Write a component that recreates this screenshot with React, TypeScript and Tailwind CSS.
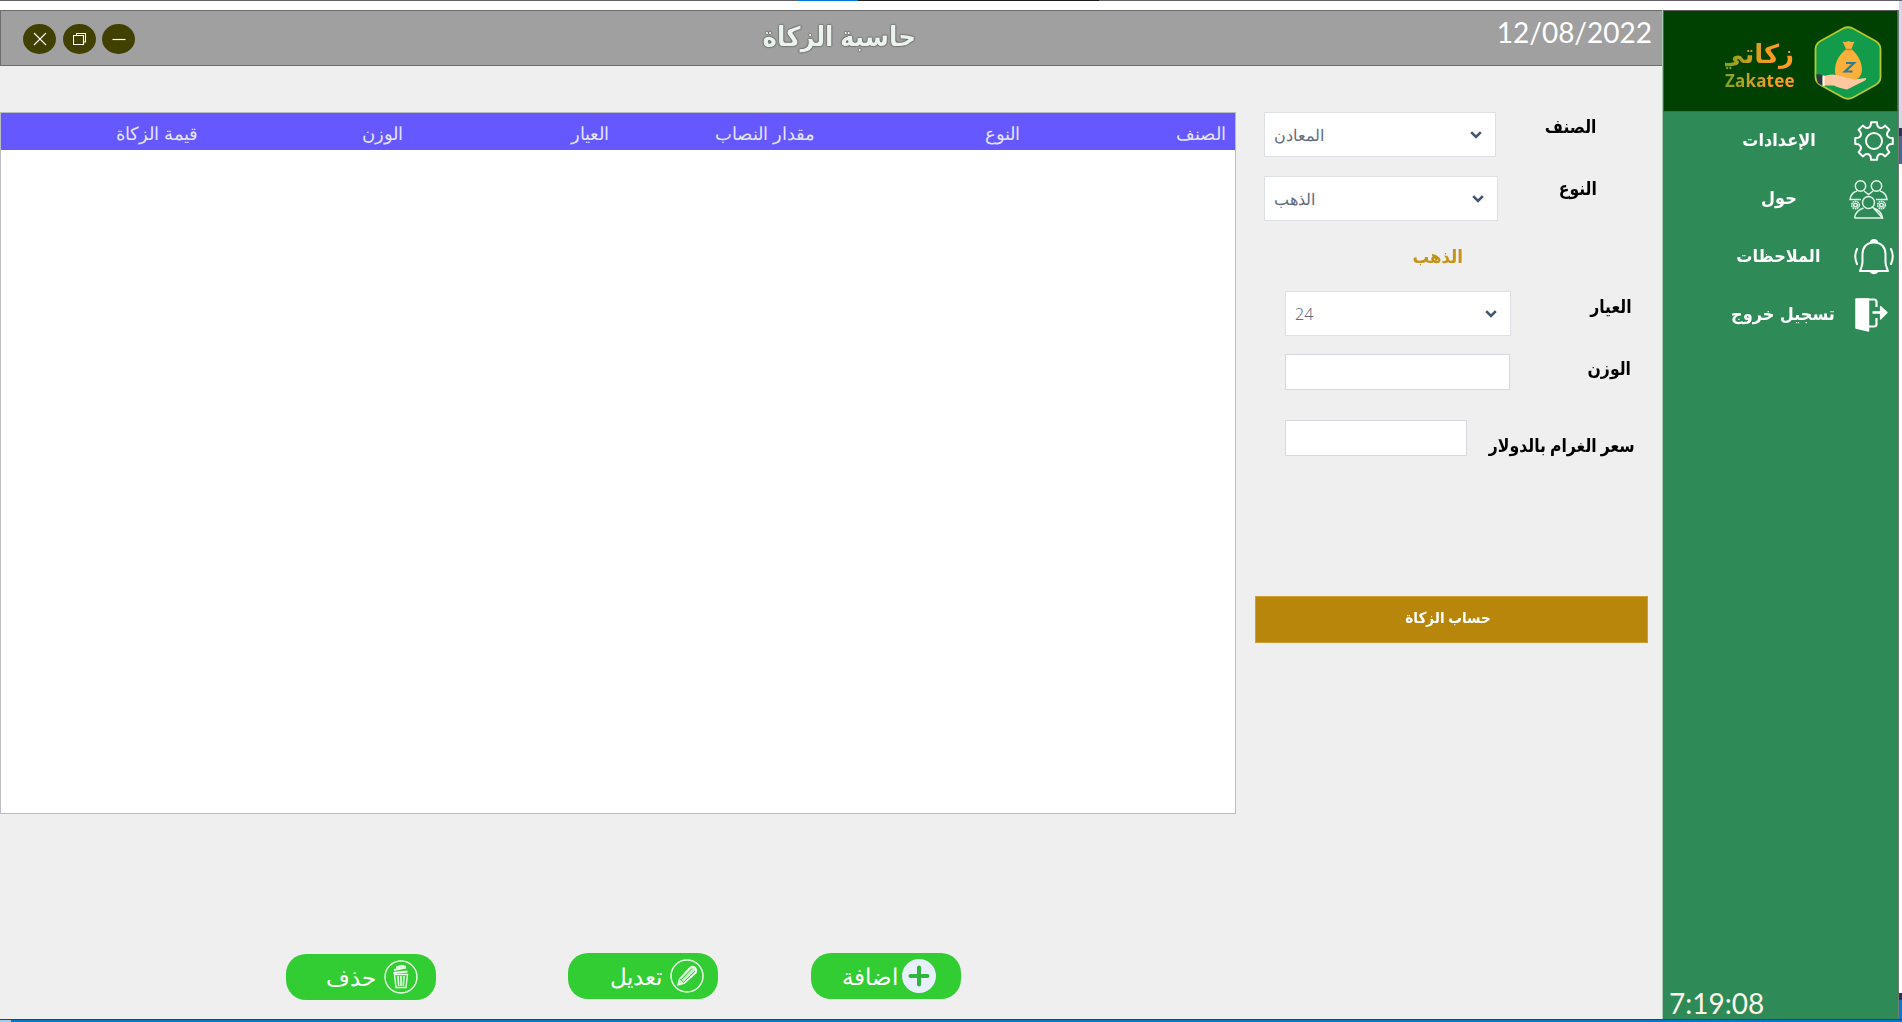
import type { ReactNode } from "react";

const arabic = "font-['Noto_Sans','DejaVu_Sans',sans-serif]";

const columns = ["الصنف", "النوع", "مقدار النصاب", "العيار", "الوزن", "قيمة الزكاة"];

function WindowButton({ children }: { children: ReactNode }) {
  return (
    <button className="flex h-[30px] w-[33px] items-center justify-center rounded-[50%] bg-[#404000]">
      {children}
    </button>
  );
}

function TitleBar() {
  return (
    <header className="flex h-14 justify-between border-t border-b border-l border-[#6d6d6d] bg-[#a0a0a0] pr-[10px] pl-[22px]">
      <div className="flex w-[190px] pt-[13px]">
        <WindowButton>
          <svg width="14" height="14" viewBox="0 0 14 14" fill="none" stroke="#fff" strokeWidth="1.1">
            <path d="M1 1L13 13M13 1L1 13" />
          </svg>
        </WindowButton>
        <span className="w-[7px]" />
        <WindowButton>
          <svg width="14" height="14" viewBox="0 0 14 14" fill="none" stroke="#fff" strokeWidth="1.1">
            <path d="M0.500 3.500h10v9h-10zM3.500 3.500V1.500h9V10h-2" />
          </svg>
        </WindowButton>
        <span className="w-[6px]" />
        <WindowButton>
          <svg width="14" height="14" viewBox="0 0 14 14" stroke="#fff" strokeWidth="1.200">
            <path d="M0.500 7.500h13" />
          </svg>
        </WindowButton>
      </div>
      <h1
        dir="rtl"
        className={`${arabic} mt-[5px] mr-[26px] origin-center scale-x-[0.91] text-[27px] leading-[40px] font-bold whitespace-nowrap text-[#eaf3ec] [text-shadow:0_0_1px_#444,0_0_2px_#444,0_0_1px_#444]`}
      >
        حاسبة الزكاة
      </h1>
      <time className="mt-[2px] w-[160px] text-right font-['Lato'] text-[28px] leading-[38px] whitespace-nowrap text-white">
        12/08/2022
      </time>
    </header>
  );
}

function ZakatTable() {
  return (
    <section dir="rtl" className="mt-[46px] h-[702px] w-[1236px] border border-[#b9bcc3] bg-white">
      <div className="grid h-[37px] grid-cols-6 bg-[#6558ff]">
        {columns.map((c) => (
          <div key={c} className={`${arabic} pr-[9px] text-[17.5px] leading-[40px] font-light text-[#e6e3ff]`}>
            {c}
          </div>
        ))}
      </div>
    </section>
  );
}

function ActionButton({ label, icon, className }: { label: string; icon: ReactNode; className: string }) {
  return (
    <button
      dir="rtl"
      className={`flex h-[46px] w-[150px] items-center rounded-[20px] bg-[#32cd32] text-white ${className}`}
    >
      {icon}
      <span className={`${arabic} text-[23px] leading-[30px] font-light whitespace-nowrap`}>{label}</span>
    </button>
  );
}

function AddIcon() {
  return (
    <svg width="34" height="34" viewBox="0 0 34 34">
      <circle cx="17" cy="17" r="17" fill="#e8f0ff" />
      <path d="M17 8.500v17M8.500 17h17" stroke="#32b53c" strokeWidth="4" strokeLinecap="round" />
    </svg>
  );
}

function EditIcon() {
  return (
    <svg width="34" height="34" viewBox="0 0 34 34" fill="none" stroke="#eaffea" strokeWidth="1.500">
      <circle cx="17" cy="17" r="16" />
      <path d="M8 26l1.500-6L20 8.500q3-2 5 0t1 5L14.500 24z" fill="#c9f3c9" />
      <path d="M11.500 20.500L22 9.500M14 23L25 12M10 20l4 4" stroke="#32cd32" strokeWidth="1" />
    </svg>
  );
}

function DeleteIcon() {
  return (
    <svg width="34" height="34" viewBox="0 0 34 34" fill="none" stroke="#eaffea" strokeWidth="1.400">
      <circle cx="17" cy="17" r="16" />
      <path d="M10.500 14.500h13l-1.500 13h-10z" />
      <path d="M14 16l.7 10M17 16v10M20 16l-.7 10" strokeWidth="1.600" />
      <path d="M9.500 13l14-1.500M10 10l12-2.500M12 7.500l6-1.500 4 1" strokeWidth="2.200" />
    </svg>
  );
}

function Actions() {
  return (
    <div className="mt-[139px] flex items-start">
      <ActionButton label="حذف" icon={<DeleteIcon />} className="mt-px ml-[286px] gap-[8px] pr-[18px]" />
      <ActionButton label="تعديل" icon={<EditIcon />} className="ml-[132px] gap-[8px] pr-[14px]" />
      <ActionButton label="اضافة" icon={<AddIcon />} className="ml-[93px] gap-[4px] pr-[25px]" />
    </div>
  );
}

function Label({ children, className }: { children: ReactNode; className: string }) {
  return (
    <label
      dir="rtl"
      className={`${arabic} origin-right scale-x-[0.87] text-[18px] leading-[26px] font-bold whitespace-nowrap text-black ${className}`}
    >
      {children}
    </label>
  );
}

function Select({ value, className }: { value: string; className: string }) {
  return (
    <div className={`flex h-[45px] items-center justify-between border border-[#dde0e5] bg-white pr-[13px] pl-[9px] ${className}`}>
      <span className={`${arabic} text-[16px] font-light text-[#5f6b80]`}>{value}</span>
      <svg width="12" height="8" viewBox="0 0 12 8" fill="none" stroke="#43566e" strokeWidth="2.600">
        <path d="M1.200 1.200L6 6l4.800-4.800" />
      </svg>
    </div>
  );
}

function CalculatorForm() {
  return (
    <section className="flex w-[424px] flex-col pt-[46px]">
      <div className="flex h-[64px] justify-between pr-[66px] pl-[26px]">
        <Select value="المعادن" className="w-[232px]" />
        <Label className="mt-[1px]">الصنف</Label>
      </div>
      <div className="flex h-[64px] justify-between pr-[65px] pl-[26px]">
        <Select value="الذهب" className="w-[234px]" />
        <Label className="-mt-[1px]">النوع</Label>
      </div>
      <div className="flex h-[51px] justify-end pr-[199px]">
        <span
          dir="rtl"
          className={`${arabic} mt-[3px] origin-right scale-x-[0.92] text-[18px] leading-[26px] font-bold text-[#c4941a]`}
        >
          الذهب
        </span>
      </div>
      <div className="flex h-[63px] justify-between pr-[30px] pl-[47px]">
        <Select value="24" className="w-[226px]" />
        <Label className="mt-[2px]">العيار</Label>
      </div>
      <div className="flex h-[66px] justify-between pr-[31px] pl-[47px]">
        <input aria-label="الوزن" className="h-[36px] w-[225px] border border-[#d5d9de] bg-white" />
        <Label className="mt-[1px]">الوزن</Label>
      </div>
      <div className="flex h-[176px] justify-between pr-[30px] pl-[47px]">
        <input aria-label="سعر الغرام" className="h-[36px] w-[182px] shrink-0 border border-[#d5d9de] bg-white" />
        <Label className="mt-[12px]">سعر الغرام بالدولار</Label>
      </div>
      <button
        dir="rtl"
        className={`${arabic} ml-[17px] h-[47px] w-[393px] border border-[#cf9f35] bg-[#b8860b] pr-[8px] pb-[4px] text-[15px] font-bold text-white`}
      >
        <span className="inline-block scale-x-[0.91]">حساب الزكاة</span>
      </button>
    </section>
  );
}

function Logo() {
  return (
    <div className="flex h-[102px] justify-end border border-[#5c5c5c] bg-[#004000] pr-[15px]">
      <div className="mt-[25px] w-[69px] bg-gradient-to-r from-[#7fa31d] to-[#ff9a22] to-70% bg-clip-text text-transparent">
        <div dir="rtl" className={`${arabic} h-[34px] text-[26px] leading-[34px] font-black whitespace-nowrap`}>زكاتي</div>
        <div className="font-['Noto_Sans'] text-[17px] leading-[22px] font-bold tracking-[0.2px]">Zakatee</div>
      </div>
      <svg className="mt-[15px] ml-[20px]" width="68" height="74" viewBox="0 0 68 74">
        <path
          d="M29 2.500q5-2.500 10 0L61.500 15q5 3 5 8v28q0 5-5 8L39 71.500q-5 2.500-10 0L6.500 59q-5-3-5-8V23q0-5 5-8z"
          fill="#139b4c"
          stroke="#b5c92b"
          strokeWidth="1.800"
        />
        <path d="M28.500 15.500q3 1 6-.5 3 1.500 6 .5l-3 7.500q10 9 10.500 20 0 12-14 12T21 43q.5-11 11-20z" fill="#fbb03b" />
        <path d="M31.500 23.500h6.500" stroke="#c6812a" strokeWidth="1.500" />
        <path d="M32 37h8l-9 8.500h7.500" fill="none" stroke="#2c7d9b" strokeWidth="2.200" />
        <path d="M10 50q9-3 16 0l14 3.500 12-1.500q1 2-4 4l-15 7.500q-10-2-13-4H10z" fill="#fdc7a0" />
        <path d="M2.500 48l6 1v11L4 57q-1.500-3-1.500-9z" fill="#35333d" />
        <path d="M9.500 49.500v10.500" stroke="#fff" strokeWidth="2" />
      </svg>
    </div>
  );
}

const polar = (radius: number, degrees: number) => {
  const a = (degrees * Math.PI) / 180;
  return `${(20 + radius * Math.cos(a)).toFixed(2)} ${(20 + radius * Math.sin(a)).toFixed(2)}`;
};

const gearOutline =
  Array.from({ length: 8 }, (_, i) => {
    const a = i * 45;
    return `${i ? "L" : "M"}${polar(19, a - 9)}L${polar(19, a + 9)}L${polar(16, a + 12)}Q${polar(13, a + 22.5)} ${polar(16, a + 33)}`;
  }).join("") + "Z";

function GearIcon() {
  return (
    <svg width="40" height="40" viewBox="0 0 40 40" fill="none" stroke="#fff" strokeWidth="2" strokeLinejoin="round">
      <circle cx="20" cy="20" r="8" />
      <path d={gearOutline} />
    </svg>
  );
}

function PeopleIcon() {
  return (
    <svg width="39" height="39" viewBox="0 0 39 39" fill="none" stroke="#e3f5ea" strokeWidth="1.500">
      <circle cx="11.500" cy="6" r="5.200" />
      <circle cx="27.500" cy="6" r="5.200" />
      <path d="M12 19.500H1q1-7 7-8.500M15 11l4.500 3.500L24 11M31 11q6 1.500 7 8.500H27" />
      <circle cx="19.500" cy="22.500" r="6" />
      <path d="M5.500 38q1-7.500 9-10M24.500 28q8 2.500 9 10zM5.500 38h28" />
      <circle cx="6.500" cy="25" r="3.800" strokeDasharray="1.800 .6" />
      <circle cx="32.500" cy="25" r="3.800" strokeDasharray="1.800 .6" />
      <circle cx="6.500" cy="25" r="1.800" />
      <circle cx="32.500" cy="25" r="1.800" />
    </svg>
  );
}

function BellIcon() {
  return (
    <svg width="40" height="36" viewBox="0 0 40 36" fill="none" stroke="#fff" strokeWidth="2" strokeLinecap="round" strokeLinejoin="round">
      <path d="M20 3.500C12 3.500 8.500 9 8.500 15v8c0 4-1.500 6-2.500 9h28c-1-3-2.500-5-2.500-9v-8C31.500 9 28 3.500 20 3.500z" />
      <path d="M17 2.500q3-3 6 0l-3 .5zM16.500 32.500q3.500 3.500 7 0z" fill="#fff" />
      <path d="M3 10q-3.500 7.500 0 15M37 10q3.500 7.500 0 15" />
    </svg>
  );
}

function ExitIcon() {
  return (
    <svg width="33" height="34" viewBox="0 0 33 34" fill="none" stroke="#fff" strokeWidth="2.200" strokeLinejoin="round">
      <path d="M1 1h12.500v32L1 30z" fill="#fff" strokeWidth="1.500" />
      <path d="M3 1.500h16q2.500 0 2.500 2.500v5M21.500 20v6q0 2.500-2.500 2.500h-5" />
      <path d="M17.500 14.500H26" strokeWidth="2.600" />
      <path d="M25.500 8.500l6.500 6-6.500 6.500z" fill="#fff" strokeWidth="1.200" />
    </svg>
  );
}

function MenuItem({ label, icon, className }: { label: string; icon: ReactNode; className: string }) {
  return (
    <li dir="rtl" className={`flex h-[58px] items-center ${className}`}>
      {icon}
      <span className="mb-[3px] origin-right scale-x-[0.92] font-['DejaVu_Sans'] text-[17.5px] leading-[30px] font-bold whitespace-nowrap text-white">
        {label}
      </span>
    </li>
  );
}

function Sidebar() {
  return (
    <aside className="flex w-[237px] flex-col border-r border-l border-r-[#6f7a74] border-l-[#a9c9b7] bg-[#2e8b57]">
      <Logo />
      <ul className="grow">
        <MenuItem label="الإعدادات" icon={<GearIcon />} className="gap-[38px] pr-[4px]" />
        <MenuItem label="حول" icon={<PeopleIcon />} className="gap-[52px] pr-[10px]" />
        <MenuItem label="الملاحظات" icon={<BellIcon />} className="gap-[34px] pr-[4px]" />
        <MenuItem label="تسجيل خروج" icon={<ExitIcon />} className="gap-[20px] pr-[10px]" />
      </ul>
      <time className="mb-[-3px] ml-[6px] font-['Lato'] text-[28px] leading-[38px] text-[#fff6ea]">7:19:08</time>
    </aside>
  );
}

function DesktopEdge() {
  return (
    <div className="flex grow flex-col bg-white">
      <div className="h-[127px] bg-[#d3d8ec]" />
      <div className="h-[8px] bg-[#2b3457]" />
      <div className="h-[28px] bg-[#50628f]" />
      <div className="grow" />
      <div className="h-[7px] bg-[#2b3457]" />
      <div className="h-[19px] bg-[#0a78d0]" />
    </div>
  );
}

export default function App() {
  return (
    <div className="flex h-[1022px] w-[1902px] flex-col overflow-hidden bg-white">
      <div className="flex h-px bg-[#62616a]">
        <div className="ml-[798px] w-[60px] bg-[#0078d7]" />
        <div className="w-[241px] bg-[#1c1a1c]" />
      </div>
      <div className="flex h-[1018px]">
        <div className="flex w-[1899px] flex-col pt-[9px]">
          <div className="flex grow">
            <main className="flex w-[1662px] flex-col bg-[#efefef]">
              <TitleBar />
              <div className="flex grow">
                <div className="w-[1238px]">
                  <ZakatTable />
                  <Actions />
                </div>
                <CalculatorForm />
              </div>
            </main>
            <Sidebar />
          </div>
        </div>
        <DesktopEdge />
      </div>
      <div className="h-[3px] shrink-0 border-t border-[#28445c] bg-[#0078d0]">
        <div className="h-[2px] w-[11px] bg-[#a5cbe8]" />
      </div>
    </div>
  );
}
